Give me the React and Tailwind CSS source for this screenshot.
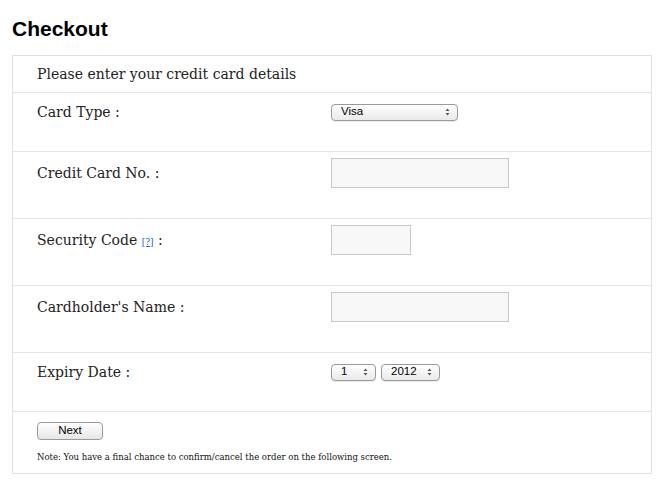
import React from "react";

const serif = { fontFamily: '"DejaVu Serif", Georgia, serif' };
const sans = { fontFamily: '"Liberation Sans", Arial, sans-serif' };

function Arrows() {
  return (
    <svg width="5" height="8" viewBox="0 0 5 8" className="shrink-0">
      <path d="M2.5 0.5 L4.5 3 L0.5 3 Z" fill="#555" />
      <path d="M2.5 7.5 L4.5 5 L0.5 5 Z" fill="#555" />
    </svg>
  );
}

function FakeSelect({ value, width }) {
  return (
    <div
      className={`flex items-center justify-between h-[17px] ${width} pl-[9px] pr-[7px] rounded-[4px] border border-[#9a9a9a] bg-gradient-to-b from-white to-[#e9e9e9] text-[11.5px] text-black shadow-[0_1px_0_rgba(0,0,0,0.08)]`}
      style={sans}
    >
      <span>{value}</span>
      <Arrows />
    </div>
  );
}

function TextBox({ width }) {
  return <div className={`h-[30px] ${width} bg-[#f8f8f8] border border-[#c9c9c9]`} />;
}

function Row({ label, height, top, children }) {
  return (
    <div className={`flex items-start border-t border-[#e4e4e4] ${height} ${top}`}>
      <div className="w-[318px] pl-[24px] h-[30px] flex items-center text-[14px] text-[#222]" style={serif}>
        {label}
      </div>
      <div className="h-[30px] flex items-center gap-[5px]">{children}</div>
    </div>
  );
}

export default function App() {
  return (
    <div className="w-[671px] h-[492px] bg-white px-[12px] pt-[16px]">
      <h1 className="text-[21px] font-bold text-black leading-[25px] mb-[14px]" style={sans}>
        Checkout
      </h1>
      <div className="w-[640px] border border-[#e0e0e0]">
        <div className="h-[36px] pl-[24px] flex items-center text-[14px] text-[#222]" style={serif}>
          Please enter your credit card details
        </div>
        <Row label="Card Type :" height="h-[59px]" top="pt-[4px]">
          <FakeSelect value="Visa" width="w-[127px]" />
        </Row>
        <Row label="Credit Card No. :" height="h-[67px]" top="pt-[6px]">
          <TextBox width="w-[178px]" />
        </Row>
        <Row
          label={
            <span>
              Security Code{" "}
              <a href="#" className="text-[9px] text-[#1a5fd0] underline">[?]</a> :
            </span>
          }
          height="h-[67px]"
          top="pt-[6px]"
        >
          <TextBox width="w-[80px]" />
        </Row>
        <Row label="Cardholder's Name :" height="h-[67px]" top="pt-[6px]">
          <TextBox width="w-[178px]" />
        </Row>
        <Row label="Expiry Date :" height="h-[59px]" top="pt-[4px]">
          <FakeSelect value="1" width="w-[45px]" />
          <FakeSelect value="2012" width="w-[59px]" />
        </Row>
        <div className="border-t border-[#e4e4e4] h-[62px] pl-[24px] pt-[10px]">
          <button
            className="block w-[66px] h-[18px] rounded-[4px] border border-[#9a9a9a] bg-gradient-to-b from-white to-[#e6e6e6] text-[11.5px] text-black leading-none"
            style={sans}
          >
            Next
          </button>
          <p className="mt-[11px] text-[8.5px] text-[#111]" style={serif}>
            Note: You have a final chance to confirm/cancel the order on the following screen.
          </p>
        </div>
      </div>
    </div>
  );
}
